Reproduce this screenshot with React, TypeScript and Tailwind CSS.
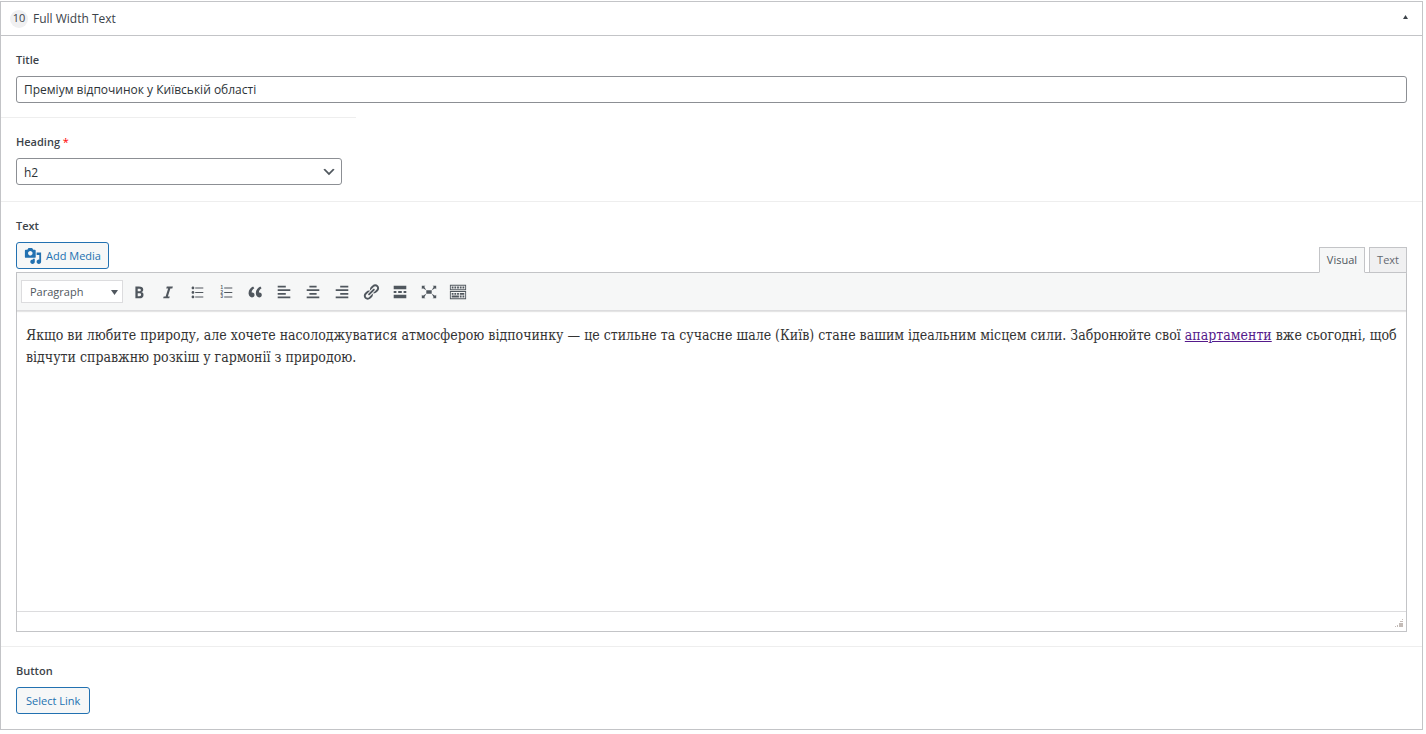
import { useState, type ReactNode } from 'react';

interface ToolbarItem {
    label: string;
    icon: ReactNode;
}

const TOOLBAR: ToolbarItem[] = [
    {
        label: 'Bold',
        icon: <path d="M6 4v13h4.54c1.37 0 2.46-.33 3.26-1 .8-.66 1.2-1.58 1.2-2.77 0-.84-.17-1.51-.51-2.01s-.9-.85-1.67-1.03v-.09c.57-.1 1.02-.4 1.36-.9s.51-1.13.51-1.91c0-1.14-.39-1.98-1.17-2.5C12.75 4.26 11.5 4 9.78 4H6zm2.57 5.15V6.26h1.36c.73 0 1.27.11 1.61.32.34.22.51.58.51 1.07 0 .54-.16.92-.47 1.15s-.82.35-1.51.35h-1.5zm0 2.19h1.6c1.44 0 2.16.53 2.16 1.61 0 .6-.17 1.05-.51 1.34s-.86.43-1.57.43H8.57v-3.38z" />,
    },
    {
        label: 'Italic',
        icon: <path d="M14.78 6h-2.13l-2.8 9h2.12l-.62 2H4.6l.62-2h2.14l2.8-9H8.03l.62-2h6.75z" />,
    },
    {
        label: 'Bulleted list',
        icon: <path d="M5.5 7C4.67 7 4 6.33 4 5.5 4 4.68 4.67 4 5.5 4 6.32 4 7 4.68 7 5.5 7 6.33 6.32 7 5.5 7zM8 5h9v1H8V5zm-2.5 7c-.83 0-1.5-.67-1.5-1.5C4 9.68 4.67 9 5.5 9c.82 0 1.5.68 1.5 1.5 0 .83-.68 1.5-1.5 1.5zM8 10h9v1H8v-1zm-2.5 7c-.83 0-1.5-.67-1.5-1.5 0-.82.67-1.5 1.5-1.5.82 0 1.5.68 1.5 1.5 0 .83-.68 1.5-1.5 1.5zM8 15h9v1H8v-1z" />,
    },
    {
        label: 'Numbered list',
        icon: (
            <>
                <path d="M8 5h9v1H8zM8 10h9v1H8zM8 15h9v1H8z" />
                <g fontFamily="Liberation Sans, sans-serif" fontSize="5" fontWeight="bold">
                    <text x="4" y="7">1</text>
                    <text x="4" y="12">2</text>
                    <text x="4" y="17">3</text>
                </g>
            </>
        ),
    },
    {
        label: 'Blockquote',
        icon: <path d="M9.49 13.22c0-.74-.2-1.38-.61-1.9-.62-.78-1.83-.88-2.53-.72-.29-1.65 1.11-3.75 2.92-4.65L7.88 4c-2.73 1.3-5.42 4.28-4.96 8.05C3.21 14.43 4.59 16 6.54 16c.85 0 1.56-.25 2.12-.75s.83-1.18.83-2.03zm8.05 0c0-.74-.2-1.38-.61-1.9-.63-.78-1.83-.88-2.53-.72-.29-1.65 1.11-3.75 2.92-4.65L15.93 4c-2.73 1.3-5.41 4.28-4.95 8.05.29 2.38 1.66 3.95 3.61 3.95.85 0 1.56-.25 2.12-.75s.83-1.18.83-2.03z" />,
    },
    {
        label: 'Align left',
        icon: <path d="M12 5V3H3v2h9zm5 4V7H3v2h14zm-5 4v-2H3v2h9zm5 4v-2H3v2h14z" />,
    },
    {
        label: 'Align center',
        icon: <path d="M14 5V3H6v2h8zm3 4V7H3v2h14zm-3 4v-2H6v2h8zm3 4v-2H3v2h14z" />,
    },
    {
        label: 'Align right',
        icon: <path d="M17 5V3H8v2h9zm0 4V7H3v2h14zm0 4v-2H8v2h9zm0 4v-2H3v2h14z" />,
    },
    {
        label: 'Insert/edit link',
        icon: <path d="M17.74 2.76c1.68 1.69 1.68 4.41 0 6.1l-1.53 1.52c-1.12 1.12-2.7 1.47-4.14 1.09l2.62-2.61.76-.77.76-.76c.84-.84.84-2.2 0-3.04-.84-.85-2.2-.85-3.04 0l-.77.76-3.38 3.38c-.37-1.44-.02-3.02 1.1-4.14l1.52-1.53c1.69-1.68 4.42-1.68 6.1 0zM8.59 13.43l5.34-5.34c.42-.42.42-1.1 0-1.52-.44-.43-1.13-.39-1.53 0l-5.33 5.34c-.42.42-.42 1.1 0 1.52.44.43 1.13.39 1.52 0zm-.76 2.29l4.14-4.15c.38 1.44.03 3.02-1.09 4.14l-1.52 1.53c-1.69 1.68-4.41 1.68-6.1 0-1.68-1.68-1.68-4.42 0-6.1l1.53-1.52c1.12-1.12 2.7-1.47 4.14-1.1l-4.14 4.15c-.85.84-.85 2.2 0 3.05.84.84 2.2.84 3.04 0z" />,
    },
    {
        label: 'Insert Read More tag',
        icon: <path d="M17 7V3H3v4h14zM6 11V9H3v2h3zm6 0V9H8v2h4zm5 0V9h-3v2h3zm0 6v-4H3v4h14z" />,
    },
    {
        label: 'Fullscreen',
        icon: <path d="M7 8h6v4H7zm-5 5v4h4l-1.2-1.2L7 12l-3.8 2.2M14 17h4v-4l-1.2 1.2L13 12l2.2 3.8M14 3l1.3 1.3L13 8l3.8-2.2L18 7V3M6 3H2v4l1.2-1.2L7 8 4.7 4.3" />,
    },
    {
        label: 'Toolbar Toggle',
        icon: <path d="M19 2v6H1V2h18zm-1 5V3H2v4h16zM5 4v2H3V4h2zm3 0v2H6V4h2zm3 0v2H9V4h2zm3 0v2h-2V4h2zm3 0v2h-2V4h2zm2 5v9H1V9h18zm-1 8v-7H2v7h16zM5 11v2H3v-2h2zm3 0v2H6v-2h2zm3 0v2H9v-2h2zm6 0v2h-5v-2h5zm-6 3v2H3v-2h8zm3 0v2h-2v-2h2zm3 0v2h-2v-2h2z" />,
    },
];

function Editor() {
    const [tab, setTab] = useState('Visual');

    return (
        <div>
            <div className="flex items-end justify-between">
                <button
                    type="button"
                    className="mb-[3px] flex h-[27px] items-center gap-1 rounded-[3px] border border-[#2271b1] bg-[#f6f7f7] px-[7px] pt-px text-[11px] text-[#2271b1]"
                >
                    <svg className="size-[18px]" viewBox="0 0 20 20" fill="currentColor" aria-hidden="true">
                        <path d="M13 11V4c0-.55-.45-1-1-1h-1.67L9 1H5L3.67 3H2c-.55 0-1 .45-1 1v7c0 .55.45 1 1 1h10c.55 0 1-.45 1-1zM7 4.5c1.38 0 2.5 1.12 2.5 2.5S8.38 9.5 7 9.5 4.5 8.38 4.5 7 5.62 4.5 7 4.5zM14 6h5v10.5c0 1.38-1.12 2.5-2.5 2.5S14 17.88 14 16.5s1.12-2.5 2.5-2.5c.17 0 .34.02.5.05V9h-3V6zm-4 8.05V13h2v3.5c0 1.38-1.12 2.5-2.5 2.5S7 17.88 7 16.5 8.12 14 9.5 14c.17 0 .34.02.5.05z" />
                    </svg>
                    Add Media
                </button>
                <div className="-mb-px flex gap-1">
                    {['Visual', 'Text'].map((name) => (
                        <button
                            key={name}
                            type="button"
                            onClick={() => setTab(name)}
                            className={`relative h-[26px] border border-[#c3c4c7] px-[7px] text-[11px] ${
                                tab === name
                                    ? 'border-b-[#f6f7f7] bg-[#f6f7f7] text-[#50575e]'
                                    : 'bg-[#f0f0f1] text-[#646970]'
                            }`}
                        >
                            {name}
                        </button>
                    ))}
                </div>
            </div>

            <div className="border border-[#c3c4c7]">
                {/* Toolbar */}
                <div className="flex h-[38px] items-center border-b border-[#dcdcde] bg-[#f6f7f7] pl-1 shadow-[0_1px_1px_rgba(0,0,0,0.1)]">
                    <button
                        type="button"
                        className="mr-px flex h-[23px] w-[102px] items-center justify-between border border-[#dcdcde] bg-white pt-[2px] pr-1 pl-2 text-[11px] text-[#50575e]"
                    >
                        Paragraph
                        <svg className="h-[5px] w-[7px]" viewBox="0 0 7 5" fill="currentColor" aria-hidden="true">
                            <path d="M0 0h7L3.5 5z" />
                        </svg>
                    </button>
                    {TOOLBAR.map((item) => (
                        <button
                            key={item.label}
                            type="button"
                            aria-label={item.label}
                            className="flex h-7 w-[29px] items-center justify-center text-[#50575e]"
                        >
                            <svg className="size-[18px]" viewBox="0 0 20 20" fill="currentColor" aria-hidden="true">
                                {item.icon}
                            </svg>
                        </button>
                    ))}
                </div>

                {/* Content */}
                <div className="h-[300px] px-[9px] pt-[13px] font-['DejaVu_Serif_Condensed','DejaVu_Serif',serif] text-sm leading-[22px] text-[#333333]">
                    <p>
                        Якщо ви любите природу, але хочете насолоджуватися атмосферою відпочинку — це стильне та сучасне
                        шале (Київ) стане вашим ідеальним місцем сили. Забронюйте свої{' '}
                        <a href="#" className="text-[#551a8b] underline">апартаменти</a> вже сьогодні, щоб відчути
                        справжню розкіш у гармонії з природою.
                    </p>
                </div>

                {/* Status bar */}
                <div className="flex h-5 items-end justify-end border-t border-[#dcdcde] pr-[2px] pb-[3px]">
                    <svg className="size-[9px] text-[#c4bcb8]" viewBox="0 0 9 9" fill="currentColor" aria-hidden="true">
                        <path d="M7 0h1v1H7zM5 2h3v1H5zM4 4h4v1H4zM4 5h4v1H4zM2 6h1v1H2zM4 6h4v1H4zM0 7h1v1H0zM2 7h1v1H2zM4 7h4v1H4z" />
                    </svg>
                </div>
            </div>
        </div>
    );
}

export default function App() {
    const [title, setTitle] = useState('Преміум відпочинок у Київській області');
    const [heading, setHeading] = useState('h2');
    const [open, setOpen] = useState(true);

    return (
        <div className="bg-white pt-px pr-[3px] font-['Open_Sans',sans-serif] text-xs text-[#3c434a]">
            <section className="border border-[#c3c4c7]">
                {/* Header */}
                <header className="flex h-[34px] items-center border-b border-[#c3c4c7] pr-[14px] pl-[9px]">
                    <span className="flex size-[18px] items-center justify-center rounded-full bg-[#f0f0f1] text-[11px]">
                        10
                    </span>
                    <h2 className="ml-[5px] text-xs">Full Width Text</h2>
                    <button
                        type="button"
                        aria-label="Toggle layout"
                        onClick={() => setOpen(!open)}
                        className="ml-auto pb-1"
                    >
                        <svg className="h-[4px] w-[5px]" viewBox="0 0 5 4" fill="currentColor" aria-hidden="true">
                            <path d="M2.5 0L5 4H0z" />
                        </svg>
                    </button>
                </header>

                {open && (
                    <div>
                        <div className="px-[15px] py-[14px]">
                            <label htmlFor="title" className="mb-[6px] block text-[11px] leading-5 font-semibold">
                                Title
                            </label>
                            <input
                                id="title"
                                type="text"
                                value={title}
                                onChange={(e) => setTitle(e.target.value)}
                                className="block h-[27px] w-full rounded-[3px] border border-[#8c8f94] px-[7px] text-xs text-[#2c3338]"
                            />
                        </div>

                        <div className="w-1/4 border-t border-[#eeeeee] pt-[14px] pr-[14px] pb-4 pl-[15px]">
                            <label htmlFor="heading" className="mb-[6px] block text-[11px] leading-5 font-semibold">
                                Heading <span className="font-normal text-[#ff0000]">*</span>
                            </label>
                            <div className="grid items-center">
                                <select
                                    id="heading"
                                    value={heading}
                                    onChange={(e) => setHeading(e.target.value)}
                                    className="col-start-1 row-start-1 h-[27px] w-full appearance-none rounded-[3px] border border-[#8c8f94] bg-white px-[7px] pt-[2px] text-xs text-[#2c3338]"
                                >
                                    <option>h1</option>
                                    <option>h2</option>
                                    <option>h3</option>
                                </select>
                                <svg
                                    className="pointer-events-none col-start-1 row-start-1 mr-[5px] size-4 justify-self-end text-[#50575e]"
                                    viewBox="0 0 20 20"
                                    fill="currentColor"
                                    aria-hidden="true"
                                >
                                    <path d="M5 6l5 5 5-5 2 1-7 7-7-7 2-1z" />
                                </svg>
                            </div>
                        </div>

                        <div className="border-t border-[#eeeeee] px-[15px] py-[14px]">
                            <h3 className="mb-[6px] text-[11px] leading-5 font-semibold">Text</h3>
                            <Editor />
                        </div>

                        <div className="border-t border-[#eeeeee] px-[15px] pt-[14px] pb-[15px]">
                            <h3 className="mb-[6px] text-[11px] leading-5 font-semibold">Button</h3>
                            <button
                                type="button"
                                className="h-[27px] rounded-[3px] border border-[#2271b1] bg-[#f6f7f7] px-[9px] pt-px text-[11px] text-[#2271b1]"
                            >
                                Select Link
                            </button>
                        </div>
                    </div>
                )}
            </section>
        </div>
    );
}
